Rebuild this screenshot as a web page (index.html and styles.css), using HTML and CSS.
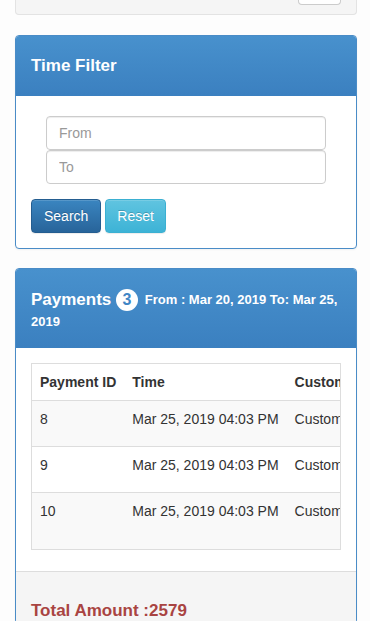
FILE: index.html
```html
<!DOCTYPE html>
<html>
<head>
  <title>Payments</title>
  <link rel="stylesheet" href="styles.css">
</head>
<body>
  <div class="container">
    <div class="well">
      <div class="well-btn"></div>
    </div>

    <div class="panel">
      <div class="panel-heading">
        <h3 class="panel-title">Time Filter</h3>
      </div>
      <div class="panel-body">
        <form class="filter-form">
          <div class="date-fields">
            <input type="text" class="form-control" placeholder="From" />
            <input type="text" class="form-control" placeholder="To" />
          </div>
          <div class="actions">
            <button type="button" class="btn btn-primary">Search</button>
            <button type="reset" class="btn btn-info">Reset</button>
          </div>
        </form>
      </div>
    </div>

    <div class="panel">
      <div class="panel-heading payments-heading">
        <h3 class="panel-title">Payments <span class="badge">3</span> <small class="range">From : Mar 20, 2019 To: Mar 25, 2019</small></h3>
      </div>
      <div class="panel-body">
        <div class="table-responsive">
          <table class="table">
            <thead>
              <tr>
                <th>Payment ID</th>
                <th>Time</th>
                <th>Customer</th>
                <th>Amount</th>
              </tr>
            </thead>
            <tbody>
              <tr>
                <td>8</td>
                <td>Mar 25, 2019 04:03 PM</td>
                <td>Customer 1</td>
                <td>860</td>
              </tr>
              <tr>
                <td>9</td>
                <td>Mar 25, 2019 04:03 PM</td>
                <td>Customer 2</td>
                <td>859</td>
              </tr>
              <tr>
                <td>10</td>
                <td>Mar 25, 2019 04:03 PM</td>
                <td>Customer 3</td>
                <td>860</td>
              </tr>
            </tbody>
          </table>
        </div>
      </div>
      <div class="panel-footer">
        <h3 class="total">Total Amount :2579</h3>
      </div>
    </div>
  </div>
</body>
</html>
```

FILE: styles.css
```css
body {
  margin: 0;
  font-family: "Liberation Sans", Arial, sans-serif;
  font-size: 14px;
  line-height: 20px;
  color: #333;
  background-color: #fdfdfd;
}
.container {
  padding: 0 13px 0 15px;
}
.well {
  height: 14px;
  margin-bottom: 20px;
  padding-right: 15px;
  display: flex;
  justify-content: flex-end;
  align-items: flex-start;
  background-color: #f5f5f5;
  border: 1px solid #e3e3e3;
  border-top: none;
  border-radius: 0 0 4px 4px;
}
.well-btn {
  width: 41px;
  height: 4px;
  background: #fff;
  border: 1px solid #ccc;
  border-top: none;
  border-radius: 0 0 4px 4px;
}
.panel {
  margin-bottom: 19px;
  background: #fff;
  border: 1px solid #4a8cc7;
  border-radius: 4px;
  box-shadow: 0 1px 2px rgba(0, 0, 0, 0.05);
  overflow: hidden;
}
.panel-heading {
  padding: 20px 15px 19px;
  color: #fff;
  background-image: linear-gradient(to bottom, #4891cd 0%, #3b80c0 100%);
  border-bottom: 1px solid #3b80c0;
}
.panel-title {
  margin: 0;
  font-size: 17px;
  font-weight: bold;
  line-height: 20px;
}
.payments-heading {
  padding: 20px 8px 14px 15px;
}
.payments-heading .panel-title {
  line-height: 22px;
}
.badge {
  display: inline-block;
  width: 22px;
  height: 22px;
  margin-right: 2px;
  border-radius: 11px;
  background: #fff;
  color: #3f86c5;
  font-size: 16px;
  line-height: 22px;
  text-align: center;
  vertical-align: top;
}
.range {
  font-size: 13px;
  font-weight: bold;
  line-height: 22px;
  vertical-align: top;
}
.panel-body {
  padding: 15px;
}
.date-fields {
  margin: 5px 15px 0;
}
.form-control {
  display: block;
  width: 100%;
  height: 34px;
  margin: 0;
  padding: 6px 12px;
  font-family: inherit;
  font-size: 14px;
  color: #555;
  background: #fff;
  border: 1px solid #ccc;
  border-radius: 4px;
  box-shadow: inset 0 1px 1px rgba(0, 0, 0, 0.075);
  box-sizing: border-box;
}
.form-control::placeholder {
  color: #999;
}
.actions {
  display: flex;
  gap: 4px;
  margin-top: 15px;
}
.btn {
  height: 34px;
  padding: 6px 12px;
  font-family: inherit;
  font-size: 14px;
  line-height: 20px;
  color: #fff;
  border-radius: 4px;
  text-shadow: 0 -1px 0 rgba(0, 0, 0, 0.2);
  box-shadow: inset 0 1px 0 rgba(255, 255, 255, 0.15), 0 1px 1px rgba(0, 0, 0, 0.075);
  cursor: pointer;
}
.btn-primary {
  background-image: linear-gradient(to bottom, #3a85c0 0%, #28649a 100%);
  border: 1px solid #245d90;
}
.btn-info {
  padding: 6px 11px;
  background-image: linear-gradient(to bottom, #60c4e0 0%, #3db3d6 100%);
  border: 1px solid #3bb0d2;
}
.table-responsive {
  overflow: hidden;
  margin-bottom: 6px;
  padding-bottom: 10px;
  background: #f9f9f9;
  border: 1px solid #ddd;
}
.table {
  border-collapse: collapse;
  white-space: nowrap;
  background: #fff;
}
.table th,
.table td {
  padding: 8px;
  text-align: left;
  vertical-align: top;
}
.table th {
  font-weight: bold;
  border-bottom: 1px solid #ddd;
}
.table td {
  border-top: 1px solid #ddd;
}
.table thead tr {
  height: 36px;
}
.table tbody tr {
  height: 46px;
}
.table tbody tr:nth-child(odd) {
  background: #f9f9f9;
}
.table tbody tr:first-child td {
  border-top: none;
}
.panel-footer {
  padding: 29px 15px 2px;
  background: #f5f5f5;
  border-top: 1px solid #ddd;
}
.total {
  margin: 0;
  font-size: 17px;
  line-height: 20px;
  color: #a94442;
}
```
